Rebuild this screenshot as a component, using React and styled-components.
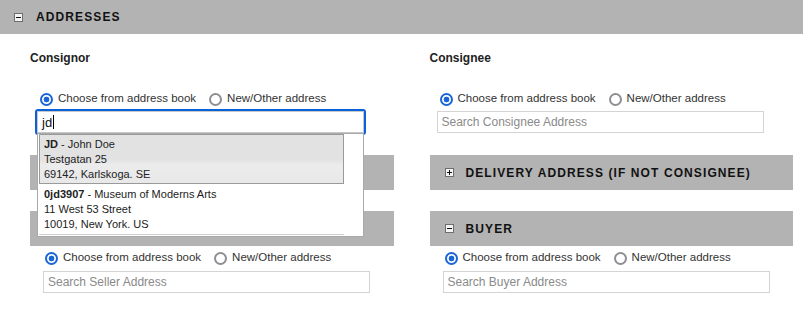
import React from "react";
import styled, { createGlobalStyle } from "styled-components";

const GlobalStyle = createGlobalStyle`
  html, body { margin: 0; padding: 0; background: #fff; }
  body { font-family: "Liberation Sans", Arial, sans-serif; color: #222; }
  *, *::before, *::after { box-sizing: border-box; }
`;

const Page = styled.div`
  width: 803px;
  height: 319px;
  overflow: hidden;
  background: #fff;
`;

const Bar = styled.div`
  display: grid;
  grid-template-columns: 36px 1fr;
  align-items: center;
  height: ${(p) => p.$h}px;
  margin-top: ${(p) => p.$top || 0}px;
  background: #b3b3b3;
`;

const BarIcon = styled.svg`
  justify-self: end;
  margin-right: ${(p) => p.$gap}px;
  display: block;
`;

const BarTitle = styled.span`
  font-size: 12px;
  font-weight: bold;
  letter-spacing: 1.1px;
  color: #111;
  text-transform: uppercase;
  white-space: nowrap;
`;

const Columns = styled.div`
  display: grid;
  grid-template-columns: 1fr 1fr;
  column-gap: 36px;
  padding: 0 10px 0 30px;
`;

const Column = styled.div`
  display: flex;
  flex-direction: column;
`;

const PartyLabel = styled.div`
  margin-top: 17px;
  font-size: 12px;
  line-height: 14px;
  font-weight: bold;
  color: #222;
`;

const RadioRow = styled.div`
  display: flex;
  align-items: flex-start;
  margin-top: ${(p) => p.$top}px;
  padding-left: ${(p) => p.$indent}px;
`;

const RadioOption = styled.label`
  display: flex;
  align-items: flex-start;
  gap: 5px;
  margin-right: 13px;
`;

const RadioInput = styled.input.attrs({ type: "radio" })`
  appearance: none;
  -webkit-appearance: none;
  flex: none;
  width: 13px;
  height: 13px;
  margin: 0;
  border-radius: 50%;
  border: 2px solid #8e8e93;
  background: #fff;
  &:checked {
    border-color: #1a66d8;
    background: radial-gradient(circle at center, #1a66d8 0 2.6px, #fff 3.2px);
  }
`;

const RadioText = styled.span`
  font-size: 11.5px;
  line-height: 10px;
  color: #333;
  white-space: nowrap;
`;

const Field = styled.div`
  position: relative;
  width: 327px;
  margin-top: ${(p) => p.$top}px;
  margin-left: ${(p) => p.$indent}px;
`;

const SearchInput = styled.input`
  display: block;
  width: 100%;
  height: 22px;
  margin: 0;
  padding: 0 4px;
  border: 1px solid #d4d4d4;
  border-radius: 0;
  background: #fff;
  font-family: "Liberation Sans", Arial, sans-serif;
  font-size: 12px;
  color: #222;
  outline: none;
  &::placeholder {
    color: #8a8a8a;
  }
`;

const ActiveInput = styled.div`
  display: flex;
  align-items: center;
  height: 22px;
  padding: 0 4px;
  border: 1px solid #c8c8c8;
  outline: 2px solid #0b62d8;
  border-radius: 1px;
  background: #fff;
  font-size: 13px;
  color: #111;
`;

const Caret = styled.span`
  display: inline-block;
  width: 1px;
  height: 14px;
  margin-left: 1px;
  background: #000;
`;

const Menu = styled.div`
  position: absolute;
  top: 100%;
  left: 0;
  width: 100%;
  z-index: 10;
  padding: 0 0 1px 1px;
  border: 1px solid #a9a9a9;
  background: #fff;
`;

const MenuItem = styled.div`
  width: 305px;
  padding: 2px 4px 1px;
  border: 1px solid ${(p) => (p.$active ? "#9a9a9a" : "transparent")};
  background: ${(p) =>
    p.$active
      ? "linear-gradient(#e2e2e2 0%, #e2e2e2 50%, #e6e6e6 56%, #ececec 62%, #e8e8e8 100%)"
      : "#fff"};
  font-size: 11px;
  line-height: 15px;
  color: #222;
  white-space: nowrap;
`;

const MenuLine = styled.span`
  display: block;
`;

const MenuRule = styled.div`
  width: 305px;
  height: 1px;
  background: #cfcfcf;
`;

function ToggleIcon({ open, gap }) {
  return (
    <BarIcon width="9" height="9" viewBox="0 0 9 9" $gap={gap}>
      <rect x="0.5" y="0.5" width="8" height="8" fill="#f4f4f4" stroke="#6e6e6e" />
      <line x1="2" y1="4.5" x2="7" y2="4.5" stroke="#111" strokeWidth="1" />
      {!open && <line x1="4.5" y1="2" x2="4.5" y2="7" stroke="#111" strokeWidth="1" />}
    </BarIcon>
  );
}

function SectionBar({ title, open, top }) {
  return (
    <Bar $h={35} $top={top}>
      <ToggleIcon open={open} gap={12} />
      <BarTitle>{title}</BarTitle>
    </Bar>
  );
}

function AddressChoice({ name, top, indent }) {
  return (
    <RadioRow $top={top} $indent={indent}>
      <RadioOption>
        <RadioInput name={name} defaultChecked />
        <RadioText>Choose from address book</RadioText>
      </RadioOption>
      <RadioOption>
        <RadioInput name={name} />
        <RadioText>New/Other address</RadioText>
      </RadioOption>
    </RadioRow>
  );
}

const suggestions = [
  { id: "JD", name: "John Doe", street: "Testgatan 25", city: "69142, Karlskoga. SE" },
  { id: "0jd3907", name: "Museum of Moderns Arts", street: "11 West 53 Street", city: "10019, New York. US" },
];

export default function App() {
  return (
    <Page>
      <GlobalStyle />
      <Bar $h={34}>
        <ToggleIcon open gap={13} />
        <BarTitle>Addresses</BarTitle>
      </Bar>
      <Columns>
        <Column>
          <PartyLabel>Consignor</PartyLabel>
          <AddressChoice name="consignor" top={28} indent={10} />
          <Field $top={5} $indent={7}>
            <ActiveInput>
              jd
              <Caret />
            </ActiveInput>
            <Menu>
              {suggestions.map((s, i) => (
                <MenuItem key={s.id} $active={i === 0}>
                  <MenuLine>
                    <b>{s.id}</b> - {s.name}
                  </MenuLine>
                  <MenuLine>{s.street}</MenuLine>
                  <MenuLine>{s.city}</MenuLine>
                </MenuItem>
              ))}
              <MenuRule />
            </Menu>
          </Field>
          <SectionBar title="Pickup address (if not consignor)" top={22} />
          <SectionBar title="Seller" open top={21} />
          <AddressChoice name="seller" top={6} indent={15} />
          <Field $top={6} $indent={13}>
            <SearchInput placeholder="Search Seller Address" />
          </Field>
        </Column>
        <Column>
          <PartyLabel>Consignee</PartyLabel>
          <AddressChoice name="consignee" top={28} indent={10} />
          <Field $top={5} $indent={7}>
            <SearchInput placeholder="Search Consignee Address" />
          </Field>
          <SectionBar title="Delivery address (if not consignee)" top={22} />
          <SectionBar title="Buyer" open top={21} />
          <AddressChoice name="buyer" top={6} indent={15} />
          <Field $top={6} $indent={13}>
            <SearchInput placeholder="Search Buyer Address" />
          </Field>
        </Column>
      </Columns>
    </Page>
  );
}
